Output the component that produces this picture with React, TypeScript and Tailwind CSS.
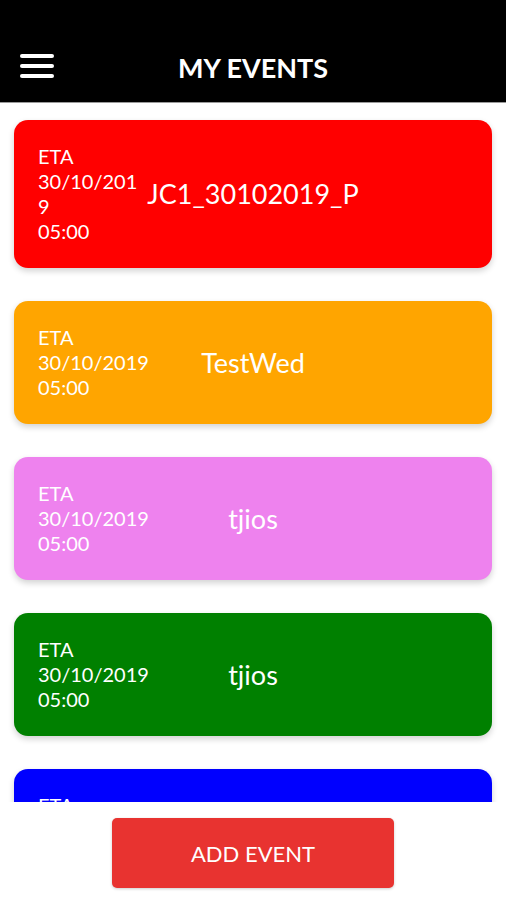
import React from "react";

type EventItem = {
  id: number;
  name: string;
  date: string;
  time: string;
  color: string;
};

const events: EventItem[] = [
  { id: 1, name: "JC1_30102019_P", date: "30/10/2019", time: "05:00", color: "bg-[#ff0000]" },
  { id: 2, name: "TestWed", date: "30/10/2019", time: "05:00", color: "bg-[#ffa500]" },
  { id: 3, name: "tjios", date: "30/10/2019", time: "05:00", color: "bg-[#ee82ee]" },
  { id: 4, name: "tjios", date: "30/10/2019", time: "05:00", color: "bg-[#008000]" },
  { id: 5, name: "tjios", date: "30/10/2019", time: "05:00", color: "bg-[#0000ff]" },
];

function EventCard({ data }: { data: EventItem }) {
  return (
    <div
      className={`${data.color} shrink-0 rounded-[14px] px-6 py-6 flex items-center text-white shadow-[0_3px_6px_rgba(0,0,0,0.18)]`}
    >
      <div className="flex-1 min-w-0 text-[20px] leading-[25px] break-all">
        <div>ETA</div>
        <div>{data.date}</div>
        <div>{data.time}</div>
      </div>
      <div className="text-[27px] leading-[32px] whitespace-nowrap">{data.name}</div>
      <div className="flex-1" />
    </div>
  );
}

export default function App() {
  return (
    <div className="h-[900px] w-full flex flex-col bg-white font-['Lato','Liberation_Sans',sans-serif] overflow-hidden">
      <header className="h-[103px] shrink-0 bg-black border-b border-[#9a9a9a] flex items-end pb-[18px] px-5">
        <div className="flex flex-col gap-[6px] w-[34px] mb-[6px]">
          <span className="block h-[4px] rounded-full bg-white" />
          <span className="block h-[4px] rounded-full bg-white" />
          <span className="block h-[4px] rounded-full bg-white" />
        </div>
        <h1 className="flex-1 text-center text-white font-bold text-[27px] leading-[32px] pr-[34px]">
          MY EVENTS
        </h1>
      </header>

      <main className="flex-1 overflow-hidden px-[14px] pt-[17px] flex flex-col gap-[33px]">
        {events.map((item) => (
          <EventCard key={item.id} data={item} />
        ))}
      </main>

      <footer className="h-[98px] shrink-0 bg-white flex items-start justify-center pt-[16px]">
        <button className="w-[282px] h-[70px] rounded-[5px] bg-[#e83330] text-white text-[22px] shadow-[0_1px_3px_rgba(0,0,0,0.2)]">
          ADD EVENT
        </button>
      </footer>
    </div>
  );
}
